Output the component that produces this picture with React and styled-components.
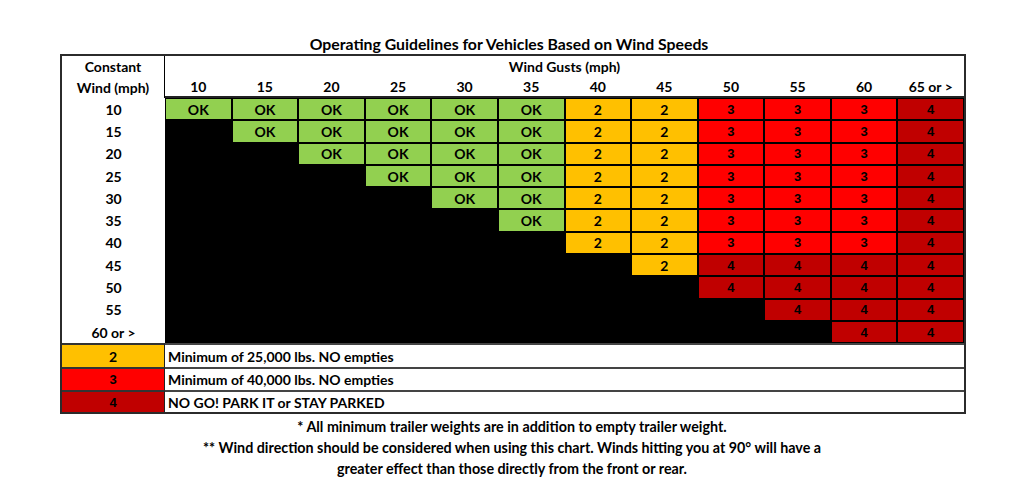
import React from "react"
import styled, { createGlobalStyle } from "styled-components"

const gusts = ["10", "15", "20", "25", "30", "35", "40", "45", "50", "55", "60", "65 or >"]
const winds = ["10", "15", "20", "25", "30", "35", "40", "45", "50", "55", "60 or >"]

// rating for a wind row / gust column, null when the combo is impossible
const rating = (row, col) => {
  if (col < row) return null
  const gust = 10 + col * 5
  const wind = 10 + row * 5
  if (gust >= 65) return "4"
  if (gust >= 40 && gust < 50) return "2"
  if (wind >= 45) return "4"
  if (gust >= 50) return "3"
  return "OK"
}

const colors = {
  OK: "#92D050",
  "2": "#FFC000",
  "3": "#FF0000",
  "4": "#C00000",
}

const legend = [
  { level: "2", text: "Minimum of 25,000 lbs. NO empties" },
  { level: "3", text: "Minimum of 40,000 lbs. NO empties" },
  { level: "4", text: "NO GO! PARK IT or STAY PARKED" },
]

const isArial = level => level === "3" || level === "4"

const GlobalStyle = createGlobalStyle`
  body {
    margin: 0;
    background: #fff;
    font-family: Lato, "Open Sans", sans-serif;
    color: #000;
  }
`

const Page = styled.div`
  width: 1024px;
  height: 499px;
  padding-top: 34px;
  box-sizing: border-box;
  display: flex;
  flex-direction: column;
  align-items: center;
`

const Title = styled.h1`
  margin: 0 0 0 -6px;
  height: 20px;
  font-size: 15.8px;
  font-weight: 700;
  line-height: 19px;
`

const Table = styled.div`
  width: 906px;
  margin-left: 2px;
  box-sizing: border-box;
  border: 2px solid #2b2b2b;
  display: grid;
  grid-template-columns: 103px repeat(12, 1fr);
  grid-template-rows: 21px 21px repeat(11, 22.3px) 24px 23px 22px;
`

const Label = styled.div`
  display: flex;
  align-items: center;
  justify-content: center;
  font-size: 14px;
  font-weight: 700;
  border-right: ${p => (p.$divider ? "1px solid #000" : "none")};
  border-bottom: ${p => (p.$under ? "2px solid #222" : "none")};
  grid-column: ${p => p.$span || "auto"};
`

const Cell = styled.div`
  display: flex;
  align-items: center;
  justify-content: center;
  box-sizing: border-box;
  border: 1px solid #000;
  background: ${p => colors[p.$level] || "#000"};
  font-size: ${p => (isArial(p.$level) ? "13px" : "14px")};
  font-weight: 700;
  font-family: ${p =>
    isArial(p.$level) ? '"Liberation Sans", Arial, sans-serif' : 'Lato, "Open Sans", sans-serif'};
  color: #000;
`

const Key = styled(Cell)`
  border: none;
  border-right: 1px solid #222;
  border-top: 2px solid #333;
`

const KeyText = styled.div`
  grid-column: 2 / span 12;
  display: flex;
  align-items: center;
  padding-left: 3px;
  font-size: 14px;
  font-weight: 700;
  border-top: 2px solid #444;
`

const Notes = styled.div`
  margin-top: 2px;
  text-align: center;
  font-size: 14.3px;
  font-weight: 700;
  line-height: 21px;
`

export default function App() {
  return (
    <Page>
      <GlobalStyle />
      <Title>Operating Guidelines for Vehicles Based on Wind Speeds</Title>
      <Table>
        <Label $divider>Constant</Label>
        <Label $span="2 / span 12">Wind Gusts (mph)</Label>
        <Label $divider>Wind (mph)</Label>
        {gusts.map(g => (
          <Label key={g} $under>
            {g}
          </Label>
        ))}
        {winds.map((w, row) => (
          <React.Fragment key={w}>
            <Label>{w}</Label>
            {gusts.map((g, col) => {
              const r = rating(row, col)
              return (
                <Cell key={g} $level={r}>
                  {r}
                </Cell>
              )
            })}
          </React.Fragment>
        ))}
        {legend.map(l => (
          <React.Fragment key={l.level}>
            <Key $level={l.level}>{l.level}</Key>
            <KeyText>{l.text}</KeyText>
          </React.Fragment>
        ))}
      </Table>
      <Notes>
        * All minimum trailer weights are in addition to empty trailer weight.
        <br />
        ** Wind direction should be considered when using this chart. Winds hitting you at 90° will have a
        <br />
        greater effect than those directly from the front or rear.
      </Notes>
    </Page>
  )
}
